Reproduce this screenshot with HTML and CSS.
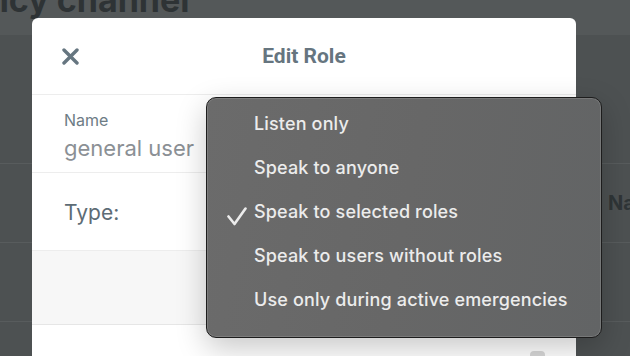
FILE: index.html
```html
<!DOCTYPE html>
<html lang="en">
<head>
    <meta charset="UTF-8">
    <meta name="viewport" content="width=device-width, initial-scale=1.0">
    <title>Edit Role</title>
    <link rel="stylesheet" href="styles.css">
</head>
<body>
    <!-- Page behind the overlay -->
    <div class="page">
        <div class="topbar">
            <h1>Emergency channel</h1>
        </div>
        <div class="list">
            <div class="list-row"><span></span><span class="col-head">Name</span></div>
            <div class="list-row"></div>
            <div class="list-row"></div>
        </div>
    </div>

    <!-- Edit Role modal -->
    <div class="modal">
        <div class="modal-header">
            <button class="close-btn" aria-label="Close">
                <svg width="17" height="17" viewBox="0 0 17 17">
                    <path d="M2 2 L15 15 M15 2 L2 15" stroke="#667680" stroke-width="3.4" stroke-linecap="round"/>
                </svg>
            </button>
            <h2>Edit Role</h2>
            <span></span>
        </div>
        <div class="field-row">
            <label>Name</label>
            <div class="field-value">general user</div>
        </div>
        <div class="field-row type-row">
            <span class="type-label">Type:</span>
        </div>
        <div class="modal-section"></div>
        <div class="modal-footer">
            <span class="toggle-stub"></span>
        </div>
    </div>

    <!-- Native style select menu -->
    <ul class="menu">
        <li>Listen only</li>
        <li>Speak to anyone</li>
        <li class="checked">
            <svg class="check" width="20" height="19" viewBox="0 0 20 19">
                <path d="M1.5 9.5 L7.5 17 L18.5 1.5" fill="none" stroke="#ececec" stroke-width="2.6" stroke-linecap="round" stroke-linejoin="round"/>
            </svg>
            Speak to selected roles
        </li>
        <li>Speak to users without roles</li>
        <li>Use only during active emergencies</li>
    </ul>
</body>
</html>
```

FILE: styles.css
```css
body {
    margin: 0;
    font-family: Inter, "Noto Sans", sans-serif;
    background-color: #4d5152;
    height: 356px;
    overflow: hidden;
}
.topbar {
    height: 35px;
    background-color: #545859;
    overflow: hidden;
}
.topbar h1 {
    margin: -17px 0 0 -139px;
    font-size: 34px;
    line-height: 34px;
    font-weight: 700;
    color: #2e3335;
    white-space: nowrap;
}
.list {
    padding-top: 128px;
}
.list-row {
    display: grid;
    grid-template-columns: 608px 1fr;
    align-items: center;
    height: 78px;
    border-top: 1px solid #585c5d;
}
.col-head {
    font-size: 20px;
    font-weight: 700;
    color: #2f3537;
    white-space: nowrap;
}
.modal {
    position: absolute;
    left: 32px;
    top: 18px;
    width: 544px;
    height: 360px;
    background-color: white;
    border-radius: 6px 6px 0 0;
}
.modal-header {
    display: grid;
    grid-template-columns: 1fr auto 1fr;
    align-items: center;
    height: 76px;
    border-bottom: 1px solid #ededed;
}
.close-btn {
    justify-self: start;
    margin-left: 30px;
    padding: 0;
    border: none;
    background: none;
    display: flex;
}
.modal-header h2 {
    margin: 0;
    font-family: Roboto, Inter, sans-serif;
    font-size: 21px;
    font-weight: 700;
    color: #66757f;
}
.field-row {
    height: 78px;
    box-sizing: border-box;
    padding: 15px 32px 0;
    border-bottom: 1px solid #ededed;
}
.field-row label {
    display: block;
    font-size: 16px;
    color: #6d7c85;
    line-height: 20px;
}
.field-value {
    margin-top: 3px;
    font-size: 22px;
    color: #8b9095;
    line-height: 30px;
}
.type-row {
    display: flex;
    align-items: center;
    padding-top: 2px;
}
.type-label {
    font-size: 21px;
    color: #5d6c75;
}
.modal-section {
    height: 73px;
    background-color: #f7f7f7;
    border-bottom: 1px solid #e6e6e6;
}
.modal-footer {
    display: flex;
    justify-content: flex-end;
    padding: 26px 31px 0;
}
.toggle-stub {
    width: 15px;
    height: 8px;
    border-radius: 4px 4px 0 0;
    background-color: #d8d8d8;
}
.menu {
    position: absolute;
    left: 206px;
    top: 97px;
    width: 396px;
    height: 241px;
    box-sizing: border-box;
    margin: 0;
    padding: 4px 0 0 47px;
    list-style: none;
    background: linear-gradient(100deg, #6b6b6b 0%, #676767 50%, #626465 100%);
    border: 1px solid #1d1d1d;
    border-radius: 10px;
    box-shadow: inset 0 0 0 1px rgba(255, 255, 255, 0.13), 0 10px 30px rgba(0, 0, 0, 0.22);
}
.menu li {
    position: relative;
    height: 44px;
    line-height: 44px;
    font-size: 18px;
    font-weight: 500;
    letter-spacing: 0.15px;
    color: #ececec;
    white-space: nowrap;
}
.check {
    position: absolute;
    left: -27px;
    top: 17px;
}
```
